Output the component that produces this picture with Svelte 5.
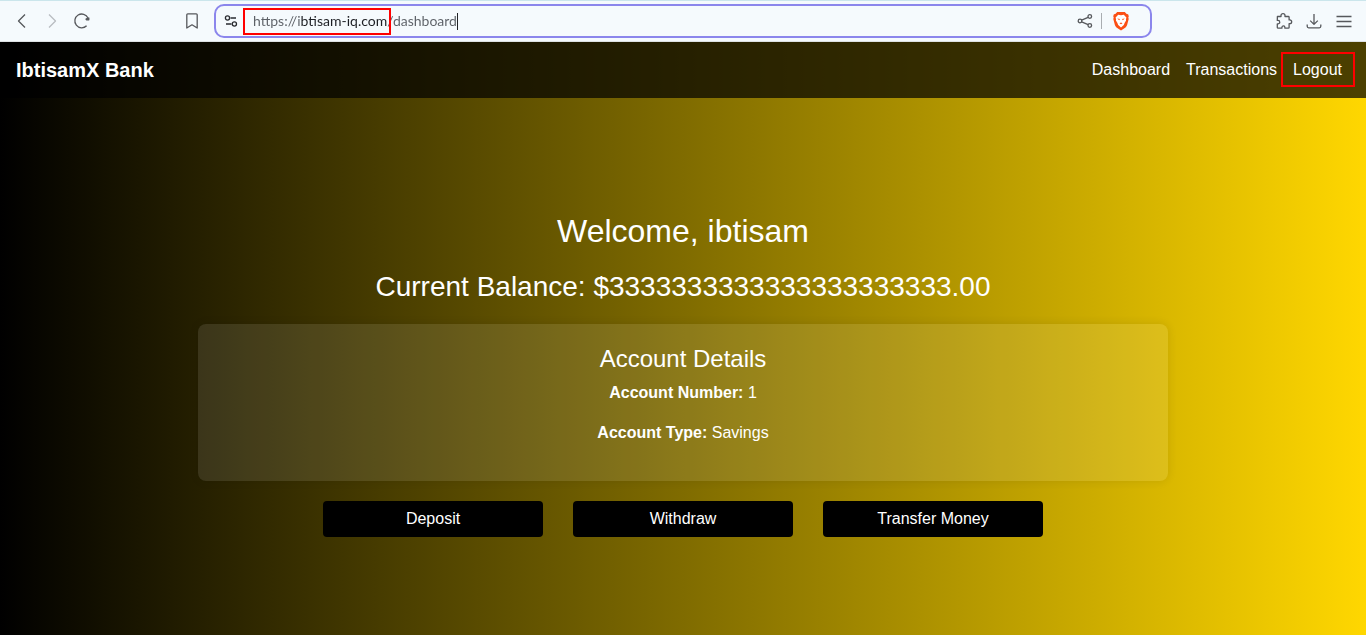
<script>
  let address = $state('https://ibtisam-iq.com/dashboard');

  const account = {
    owner: 'ibtisam',
    balance: '$3333333333333333333333.00',
    number: 1,
    type: 'Savings'
  };
  const actions = ['Deposit', 'Withdraw', 'Transfer Money'];
</script>

<div class="window">
  <header class="toolbar">
    <div class="navigation">
      <button class="tool" aria-label="Back">
        <svg viewBox="0 0 20 20"><path d="M13 3.5 6.5 10l6.5 6.5" /></svg>
      </button>
      <button class="tool faded" aria-label="Forward">
        <svg viewBox="0 0 20 20"><path d="M7 3.5 13.5 10 7 16.5" /></svg>
      </button>
      <button class="tool" aria-label="Reload">
        <svg viewBox="0 0 20 20"><path d="M14.6 14.8A6.900 6.900 0 1 1 16 7" /><path class="solid" d="M16.800 7v1.800h-2.400q-.6-.4 0-1z" /></svg>
      </button>
    </div>
    <button class="tool bookmark" aria-label="Bookmark this page">
      <svg viewBox="0 0 20 20"><path d="M4.800 3.800q0-1 1-1h8.400q1 0 1 1v13.200L10 13.800 4.800 17z" /></svg>
    </button>
    <div class="address">
      <button class="tool dark" aria-label="Site information">
        <svg viewBox="0 0 20 20"><circle cx="6.500" cy="7" r="2.100" /><path d="M9.500 7H15M5 13h5.500" /><circle cx="13.400" cy="13" r="2.100" /></svg>
      </button>
      <div class="location">
        <input class="url" aria-label="Address" bind:value={address} spellcheck="false" />
        <span class="caret"></span>
        <span class="mark host"></span>
      </div>
      <button class="tool share" aria-label="Share">
        <svg viewBox="0 0 20 20"><circle cx="5" cy="10" r="1.800" /><circle cx="14.800" cy="5.500" r="1.800" /><circle cx="14.800" cy="14.500" r="1.800" /><path d="M6.700 9.200 13.100 6.300M6.700 10.800l6.400 2.900" /></svg>
      </button>
      <span class="rule"></span>
      <button class="tool brave" aria-label="Brave Shields">
        <svg viewBox="0 0 20 20">
          <path fill="#fb4f14" d="M6.200 1 4.300 3l-1.400.2-.7 2.100.5 1.200-.4 1.400 1.600 6.200q.4 1.500 1.600 2.300L10 19.400l4.500-3q1.200-.8 1.600-2.300l1.600-6.200-.4-1.400.5-1.200-.7-2.100-1.400-.2-1.900-2z" />
          <path fill="#fff" d="m10 4.300 2.800-.6 2.600 2.900-.5 1.900.2 1.100-1.400 2.100-.9 2.400L10 16.600l-2.800-2.500-.9-2.400-1.400-2.100.2-1.100-.5-1.900 2.600-2.900z" />
          <path fill="#fb4f14" d="m6.300 7.500 2.700.5-.8 1.200zM13.700 7.500 11 8l.8 1.200zM8.500 12.200l1.500-.6 1.500.6-1.500 1z" />
        </svg>
      </button>
    </div>
    <div class="extras">
      <button class="tool" aria-label="Extensions">
        <svg viewBox="0 0 20 20"><path d="M3.400 5.500H7V4.600a2 2 0 0 1 4 0v.9h3.300q.8 0 .8.800v2.600h.7a1.900 1.900 0 0 1 0 3.800h-.7v3.700q0 .8-.8.800h-3.400v-.8a1.500 1.500 0 0 0-3 0v.8H4.100q-.8 0-.8-.8v-3.500H4a1.700 1.700 0 0 0 0-3.500h-.7z" /></svg>
      </button>
      <button class="tool" aria-label="Downloads">
        <svg viewBox="0 0 20 20"><path d="M10 3v10.200M6.200 9.600l3.800 3.800 3.800-3.800M3.200 13.500v1.800q0 1.500 1.500 1.500h10.600q1.500 0 1.500-1.500v-1.800" /></svg>
      </button>
      <button class="tool" aria-label="Menu">
        <svg viewBox="0 0 20 20"><path d="M2.500 5.500h15M2.500 10.500h15M2.500 15.500h15" /></svg>
      </button>
    </div>
  </header>

  <div class="page">
    <nav>
      <a class="brand" href="#home">IbtisamX Bank</a>
      <div class="links">
        <a href="#dashboard">Dashboard</a>
        <a href="#transactions">Transactions</a>
        <a class="logout" href="#logout">Logout<span class="mark"></span></a>
      </div>
    </nav>

    <main>
      <h1>Welcome, {account.owner}</h1>
      <h2>Current Balance: {account.balance}</h2>
      <section>
        <h3>Account Details</h3>
        <p><strong>Account Number:</strong> {account.number}</p>
        <p><strong>Account Type:</strong> {account.type}</p>
      </section>
      <div class="actions">
        {#each actions as action}
          <button>{action}</button>
        {/each}
      </div>
    </main>
  </div>
</div>

<style>
  :global(body) {
    margin: 0;
    font-family: "Liberation Sans", Arial, sans-serif;
  }

  .window {
    min-height: 100vh;
    display: flex;
    flex-direction: column;
  }

  .toolbar {
    box-sizing: border-box;
    height: 42px;
    display: flex;
    align-items: center;
    padding: 0 12px;
    background: #f5fafd;
    border-top: 1px solid #cbe6ec;
    border-bottom: 1px solid #dde1e3;
  }

  .navigation,
  .extras {
    display: flex;
    gap: 10px;
  }

  .bookmark {
    margin-left: 90px;
  }

  .tool {
    flex: none;
    width: 20px;
    height: 20px;
    padding: 0;
    border: 0;
    background: none;
    color: #56585c;
  }

  .tool svg {
    display: block;
    width: 20px;
    height: 20px;
    fill: none;
    stroke: currentColor;
    stroke-width: 1.3;
    stroke-linejoin: round;
  }

  .tool .solid {
    fill: currentColor;
  }

  .brave svg {
    stroke: none;
  }

  .faded {
    color: #b9bdc1;
  }

  .dark {
    color: #292b30;
  }

  .address {
    box-sizing: border-box;
    flex: 1;
    max-width: 938px;
    height: 34px;
    display: flex;
    align-items: center;
    margin-left: 12px;
    padding: 0 19px 0 5px;
    border: 2px solid #8b86ec;
    border-radius: 10px;
  }

  .location {
    position: relative;
    display: flex;
    align-items: center;
    margin-left: 12px;
  }

  .url {
    field-sizing: content;
    padding: 0;
    border: 0;
    outline: 0;
    font: 14px/20px Lato, "Open Sans", sans-serif;
    color: transparent;
    background: linear-gradient(to right, #5c6066 23%, #1d1f24 23%, #1d1f24 66%, #5c6066 66%);
    background-clip: text;
  }

  .caret {
    width: 1px;
    height: 17px;
    background: #202226;
  }

  .mark {
    position: absolute;
    border: 2px solid #f00;
    pointer-events: none;
  }

  .host {
    inset: -3px 67px -4px -10px;
  }

  .share {
    margin-left: auto;
  }

  .rule {
    width: 1px;
    height: 16px;
    margin: 0 9px 0 6px;
    background: #a9adb1;
  }

  .extras {
    margin-left: auto;
  }

  .page {
    flex: 1;
    display: flex;
    flex-direction: column;
    color: #fff;
    background: linear-gradient(to right, #000, #ffd700);
  }

  nav {
    display: flex;
    align-items: center;
    justify-content: space-between;
    padding: 8px 16px;
    background: rgba(0, 0, 0, 0.7);
  }

  nav a {
    color: #fff;
    text-decoration: none;
  }

  .brand {
    font-size: 20px;
    font-weight: bold;
    line-height: 30px;
  }

  .links {
    display: flex;
  }

  .links a {
    padding: 8px;
    font-size: 16px;
    line-height: 24px;
  }

  .logout {
    position: relative;
  }

  .logout .mark {
    inset: 2px -5px 3px -4px;
  }

  main {
    flex: 1;
    display: flex;
    flex-direction: column;
    align-items: center;
    justify-content: center;
    gap: 20px;
    padding: 36px 16px 20px;
    text-align: center;
  }

  h1,
  h2,
  h3 {
    margin: 0;
    font-weight: normal;
  }

  h1 {
    font-size: 32px;
    line-height: 38px;
  }

  h2 {
    font-size: 28px;
    line-height: 34px;
  }

  h3 {
    margin-bottom: 8px;
    font-size: 24px;
    line-height: 29px;
  }

  section {
    box-sizing: border-box;
    width: 100%;
    max-width: 970px;
    padding: 20px;
    border-radius: 8px;
    background: rgba(255, 255, 255, 0.1);
    box-shadow: 0 0 10px rgba(0, 0, 0, 0.1);
  }

  p {
    margin: 0 0 16px;
    font-size: 16px;
    line-height: 24px;
  }

  .actions {
    display: flex;
    flex-wrap: wrap;
    justify-content: center;
    gap: 30px;
  }

  .actions button {
    width: 220px;
    height: 36px;
    padding: 0;
    border: 0;
    border-radius: 4px;
    background: #000;
    color: #fff;
    font: 16px/24px "Liberation Sans", Arial, sans-serif;
  }
</style>
